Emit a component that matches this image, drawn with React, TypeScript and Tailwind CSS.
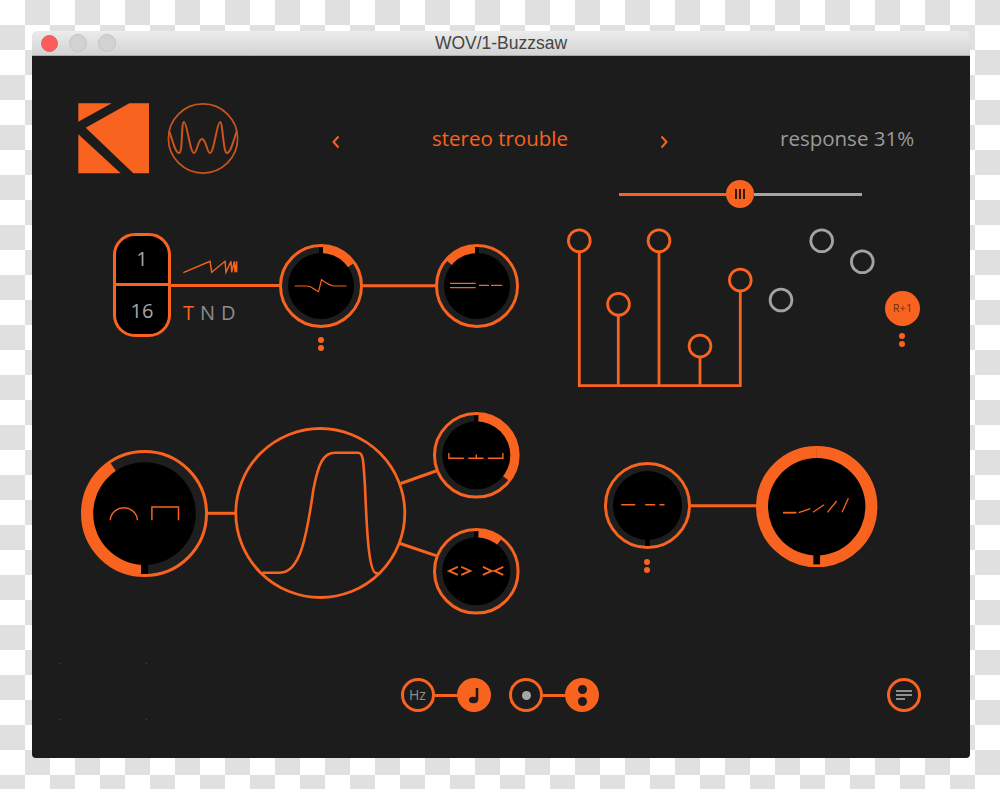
import React from "react";

const O = "#f8631f";
const TRACK = "#1e1e1e";
const OX = 32;
const OY = 174;

function polar(cx: number, cy: number, r: number, deg: number) {
  const a = ((deg - 90) * Math.PI) / 180;
  return [cx + r * Math.cos(a), cy + r * Math.sin(a)];
}
function arc(cx: number, cy: number, r: number, a0: number, a1: number) {
  const [x0, y0] = polar(cx, cy, r, a0);
  const [x1, y1] = polar(cx, cy, r, a1);
  const large = Math.abs(a1 - a0) > 180 ? 1 : 0;
  return `M${x0} ${y0}A${r} ${r} 0 ${large} 1 ${x1} ${y1}`;
}

type KnobProps = {
  cx: number;
  cy: number;
  r: number;
  inner: number;
  from?: number;
  to?: number;
  tick: number;
  tickW?: number;
  ringW?: number;
  children?: React.ReactNode;
};

function Knob({ cx, cy, r, inner, from, to, tick, tickW = 4, ringW = 3, children }: KnobProps) {
  const bandOuter = r - ringW + 1.2;
  const bandR = (bandOuter + inner - 1) / 2;
  const bandW = bandOuter - inner + 1;
  const [tx0, ty0] = polar(cx, cy, inner - 1, tick);
  const [tx1, ty1] = polar(cx, cy, bandOuter - 1.2, tick);
  return (
    <svg
      className="absolute"
      style={{ left: cx - r - OX, top: cy - r - OY }}
      width={r * 2}
      height={r * 2}
      viewBox={`${cx - r} ${cy - r} ${r * 2} ${r * 2}`}
      fill="none"
    >
      <circle cx={cx} cy={cy} r={bandR} stroke={TRACK} strokeWidth={bandW} />
      {from !== undefined && to !== undefined && (
        <path d={arc(cx, cy, bandR, from, to)} stroke={O} strokeWidth={bandW} />
      )}
      <circle cx={cx} cy={cy} r={r - ringW / 2} stroke={O} strokeWidth={ringW} />
      <circle cx={cx} cy={cy} r={inner} fill="#000" />
      <line x1={tx0} y1={ty0} x2={tx1} y2={ty1} stroke="#000" strokeWidth={tickW} />
      {children}
    </svg>
  );
}

function Dots({ x, y }: { x: number; y: number }) {
  return (
    <div
      className="absolute flex flex-col gap-[2px]"
      style={{ left: x - 3 - OX, top: y - OY }}
    >
      <span className="block w-[6px] h-[6px] rounded-full bg-[#f8631f]" />
      <span className="block w-[6px] h-[6px] rounded-full bg-[#f8631f]" />
    </div>
  );
}

function Toggle({ left, right, wire }: { left: React.ReactNode; right: React.ReactNode; wire: number }) {
  return (
    <div className="flex items-center">
      <div className="w-[34px] h-[34px] rounded-full border-[3px] border-[#f8631f] flex items-center justify-center">
        {left}
      </div>
      <div className="h-[3px] bg-[#f8631f]" style={{ width: wire }} />
      <div className="w-[34px] h-[34px] rounded-full bg-[#f8631f] flex items-center justify-center">
        {right}
      </div>
    </div>
  );
}

export default function App() {
  return (
    <div
      className="w-[1000px] h-[789px] overflow-hidden pt-[31px] pl-[32px] bg-[repeating-conic-gradient(#e0e0e0_0_25%,#ffffff_0_50%)] bg-[length:50px_50px] font-['Open_Sans',sans-serif]"
    >
      <div className="w-[938px] h-[727px] flex flex-col rounded-t-[5px] rounded-b-[4px] overflow-hidden">
        {/* title bar */}
        <div className="relative h-[25px] flex items-center pl-[9px] gap-[11px] bg-gradient-to-b from-[#ececec] to-[#d3d3d3] border-b border-[#a9a9a9]">
          <span className="w-[17px] h-[17px] rounded-full bg-[#fc5c5c] border border-[#ef5a58]" />
          <span className="w-[18px] h-[18px] rounded-full bg-[#d2d2d2] border border-[#c4c4c4]" />
          <span className="w-[18px] h-[18px] rounded-full bg-[#d2d2d2] border border-[#c4c4c4]" />
          <span className="absolute left-0 right-0 text-center text-[17.5px] leading-[25px] text-[#454545] font-['Liberation_Sans',sans-serif]">
            WOV/1-Buzzsaw
          </span>
        </div>

        {/* body */}
        <div className="relative flex-1 flex flex-col bg-[#1c1c1c]">
          {/* header */}
          <div className="h-[118px] pt-[47px] pl-[46px] flex items-start">
            <svg width="71" height="71" viewBox="78 103 71 71" className="shrink-0">
              <polygon points="78.3,103.3 111.7,103.3 78.3,121.7" fill={O} />
              <polygon points="129.3,103.3 149,103.3 149,173.3 133.3,173.3 85.7,127.7" fill={O} />
              <polygon points="78.3,134.3 120.7,173.3 78.3,173.3" fill={O} />
            </svg>
            <svg width="72" height="71" viewBox="167 103 72 71" fill="none" className="ml-[18px] shrink-0">
              <circle cx="203" cy="138.5" r="34.6" stroke="#c9551d" strokeWidth="1.7" />
              <path
                d="M169 131C172 138 175 153 179 153C183 153 181 122 184 122C187 122 190 153 194 153C197 153 198 139 202 139C206 139 207 153 210 153C214 153 217 122 220 122C223 122 223 153 227 153C231 153 234 138 237 131"
                stroke="#c9551d"
                strokeWidth="2"
              />
            </svg>
            <svg width="8" height="14" viewBox="0 0 8 14" fill="none" className="ml-[93px] mt-[32px] shrink-0">
              <path d="M6.5 1.5L1.5 7l5 5.5" stroke={O} strokeWidth="2" />
            </svg>
            <div className="w-[320px] text-center text-[20.5px] leading-[28px] mt-[21px] text-[#f8631f]">stereo trouble</div>
            <svg width="8" height="14" viewBox="0 0 8 14" fill="none" className="mt-[32px] shrink-0">
              <path d="M1.5 1.5L6.5 7l-5 5.5" stroke={O} strokeWidth="2" />
            </svg>
            <div className="ml-[112px] text-[20.5px] leading-[28px] mt-[21px] text-[#9b9b9b]">response 31%</div>
          </div>

          {/* diagram canvas */}
          <div className="relative h-[486px]">
            <svg
              className="absolute left-0 top-0"
              width="938"
              height="486"
              viewBox="32 174 938 486"
              fill="none"
            >
              {/* wires */}
              <g stroke={O} strokeWidth="3">
                <line x1="170" y1="285.5" x2="281" y2="285.5" />
                <line x1="361" y1="285.7" x2="437" y2="285.7" />
                <line x1="207" y1="513.3" x2="236" y2="513.3" />
                <line x1="400.7" y1="483.5" x2="436" y2="471" />
                <line x1="400" y1="543.5" x2="436" y2="555.7" />
                <line x1="690" y1="505.7" x2="757" y2="505.7" />
              </g>
              {/* saw */}
              <path
                d="M183.3 272.7L210 261.3L211.7 272.3L225 261.3L226 272.3L231 261.3L231.7 272.3L234.3 261.3L235 272.3L236.7 261.3V272.3"
                stroke={O}
                strokeWidth="1.4"
              />
              {/* filter */}
              <circle cx="320.3" cy="513" r="84.5" stroke={O} strokeWidth="2.8" />
              <path
                d="M262.3 572.7L280 572.7C300 572.7 306.7 536.7 313.3 490C318.3 463.3 323.3 452.7 335 452.7L358.3 452.7C363.3 452.7 363.3 460 365 486.7C366.7 526.7 368.3 573.3 376.7 573.3L378 572.5"
                stroke={O}
                strokeWidth="2.6"
              />
              {/* stems */}
              <path
                d="M579.3 252V385.7H740.3V291.5M618.3 316V385.7M659 252V385.7M700 357.5V385.7"
                stroke={O}
                strokeWidth="2.8"
              />
              <g stroke={O} strokeWidth="2.8">
                <circle cx="579.3" cy="240.7" r="10.9" />
                <circle cx="618.5" cy="304.3" r="10.9" />
                <circle cx="659" cy="240.7" r="10.9" />
                <circle cx="700" cy="346" r="10.9" />
                <circle cx="740.3" cy="280" r="10.9" />
              </g>
              <g stroke="#a3a3a3" strokeWidth="2.8">
                <circle cx="781" cy="300" r="10.9" />
                <circle cx="821.7" cy="240.7" r="10.9" />
                <circle cx="862.3" cy="261.7" r="10.9" />
              </g>
            </svg>

            {/* pill */}
            <div
              className="absolute w-[58px] h-[104px] rounded-[22px] border-[3px] border-[#f8631f] bg-black flex flex-col text-[20px] text-[#a6a6a6]"
              style={{ left: 113 - OX, top: 233 - OY }}
            >
              <div className="flex-1 flex items-center justify-center border-b-[3px] border-[#f8631f]">1</div>
              <div className="flex-1 flex items-center justify-center pt-[2px]">16</div>
            </div>
            <div
              className="absolute flex gap-[6px] text-[20px] leading-[26px] text-[#8c8c8c]"
              style={{ left: 183 - OX, top: 300 - OY }}
            >
              <span className="text-[#f8631f]">T</span>
              <span>N</span>
              <span>D</span>
            </div>

            <Knob cx={320.5} cy={285.7} r={42} inner={33} from={3} to={55} tick={0}>
              <path
                d="M294.3 285.7H306C312 285.7 314 290 318 291.5L321 279.5L324 281.5C328 284 330 285.7 334 285.7H346"
                stroke={O}
                strokeWidth="1.2"
              />
            </Knob>
            <Knob cx={477} cy={285.7} r={42} inner={33} from={-50} to={-3} tick={0}>
              <path
                d="M450 283H475.7M450 287.3H475.7M479 285H489M491 285H502.3"
                stroke={O}
                strokeWidth="1.2"
              />
            </Knob>
            <Knob cx={144.3} cy={513.3} r={63.5} inner={51.3} from={180} to={326} tick={180} tickW={7}>
              <path
                d="M110 520A13.7 13.7 0 0 1 137.3 520M151.7 520V506.7H178.3V520"
                stroke={O}
                strokeWidth="1.5"
              />
            </Knob>
            <Knob cx={476.7} cy={455.7} r={43.3} inner={34} from={3} to={128} tick={0}>
              <path
                d="M449.3 453.3V458.7H464.3M468.7 458.7H484M476.7 455V458.7M488.3 458.7H503.3V453.3"
                stroke={O}
                strokeWidth="1.4"
              />
            </Knob>
            <Knob cx={476.7} cy={571.7} r={43.3} inner={34} from={3} to={38} tick={0}>
              <path
                d="M458.3 567.3L449.3 571.3L458.3 575.3M461.7 567.3L470.7 571.3L461.7 575.3M483.3 567.3L492 571.3L483.3 575.3M503.7 567.3L495 571.3L503.7 575.3"
                stroke={O}
                strokeWidth="1.8"
              />
            </Knob>
            <Knob cx={647.3} cy={505.7} r={43.5} inner={34.5} tick={180} tickW={4.5}>
              <path d="M621 505H635M645 505H655M659.3 505H664.3" stroke={O} strokeWidth="1.5" />
            </Knob>
            <Knob cx={817} cy={506.7} r={60.7} inner={48.7} from={0} to={359.9} tick={180} tickW={6.7}>
              <path d="M783.3 512.7H796.7" stroke={O} strokeWidth="1.8" />
              <path
                d="M799 512.7L810.7 508.7M813.3 512.3L824.3 504.7M827.7 512.3L837 501M842.3 512.3L848.7 498.3"
                stroke={O}
                strokeWidth="1.3"
              />
            </Knob>

            <Dots x={320.5} y={337} />
            <Dots x={647.3} y={559} />
            <Dots x={902.3} y={333} />

            {/* response slider */}
            <div className="absolute flex items-center w-[243px]" style={{ left: 619 - OX, top: 180 - OY }}>
              <div className="w-[107px] h-[3px] bg-[#f8631f]" />
              <div className="w-[28px] h-[28px] rounded-full bg-[#f8631f] flex items-center justify-center gap-[2px] shrink-0">
                <span className="w-[2px] h-[10px] bg-[#3a1a0a]" />
                <span className="w-[2px] h-[10px] bg-[#3a1a0a]" />
                <span className="w-[2px] h-[10px] bg-[#3a1a0a]" />
              </div>
              <div className="flex-1 h-[3px] bg-[#a5a5a5]" />
            </div>

            {/* R+1 */}
            <div
              className="absolute w-[35px] h-[35px] rounded-full bg-[#f8631f] flex items-center justify-center text-[11px] text-[#6e2f10]"
              style={{ left: 885 - OX, top: 291 - OY }}
            >
              R+1
            </div>
          </div>

          {/* footer */}
          <div className="relative flex-1 flex items-start pt-[18px] pl-[368.5px]">
            <Toggle
              wire={22.5}
              left={<span className="text-[14px] leading-none text-[#8f8f8f]">Hz</span>}
              right={
                <svg width="18" height="20" viewBox="0 0 18 20" fill="none">
                  <path d="M12 3V15" stroke="#1c1c1c" strokeWidth="2.6" />
                  <ellipse cx="8.5" cy="15" rx="4.5" ry="3.2" fill="#1c1c1c" />
                </svg>
              }
            />
            <div className="ml-[18px]">
              <Toggle
                wire={22}
                left={<span className="w-[9px] h-[9px] rounded-full bg-[#a6a6a6]" />}
                right={
                  <span className="flex flex-col gap-[3px]">
                    <span className="block w-[9px] h-[9px] rounded-full bg-[#1c1c1c]" />
                    <span className="block w-[9px] h-[9px] rounded-full bg-[#1c1c1c]" />
                  </span>
                }
              />
            </div>
            <div className="ml-[288px] w-[34px] h-[34px] rounded-full border-[3px] border-[#f8631f] flex flex-col justify-center gap-[2px] pl-[6px]">
              <span className="block w-[16px] h-[2px] bg-[#8f8f8f]" />
              <span className="block w-[16px] h-[2px] bg-[#8f8f8f]" />
              <span className="block w-[9px] h-[2px] bg-[#8f8f8f]" />
            </div>
            <span className="absolute left-[28px] top-[3px] w-[1px] h-[1px] bg-[#4a4a4a]" />
            <span className="absolute left-[114px] top-[3px] w-[1px] h-[1px] bg-[#4a4a4a]" />
            <span className="absolute left-[28px] top-[59px] w-[1px] h-[1px] bg-[#4a4a4a]" />
            <span className="absolute left-[114px] top-[59px] w-[1px] h-[1px] bg-[#4a4a4a]" />
          </div>
        </div>
      </div>
    </div>
  );
}
